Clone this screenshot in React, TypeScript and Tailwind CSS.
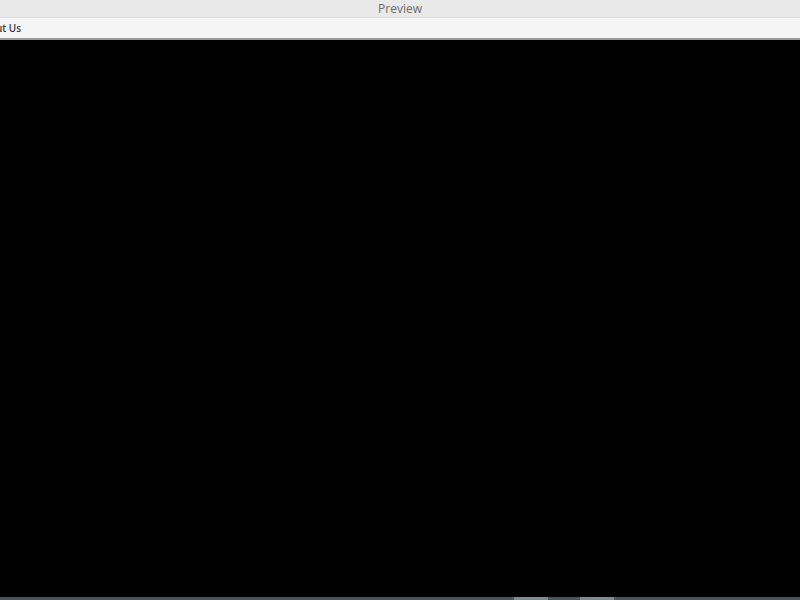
export default function App() {
  return (
    <div className="flex h-[600px] w-[800px] flex-col overflow-hidden bg-black font-['Open_Sans',sans-serif]">
      {/* window title */}
      <div className="flex h-[18px] shrink-0 items-center justify-center border-b border-[#dcdcdc] bg-[#e9e9e9]">
        <span className="text-[12px] leading-none text-[#6b6b6b]">Preview</span>
      </div>

      {/* nav strip, scrolled left */}
      <div className="flex h-[22px] shrink-0 items-center border-b-2 border-[#9a9a9a] bg-[#f5f5f5]">
        <span className="-ml-[23px] text-[10px] font-semibold leading-none text-[#3a3a3a]">About Us</span>
      </div>

      {/* video area */}
      <div className="flex-1 bg-black" />

      {/* bottom scrollbar */}
      <div className="flex h-[3px] shrink-0 bg-[#47575f]">
        <div className="w-[514px]" />
        <div className="w-[34px] bg-[#7d8b92]" />
        <div className="w-[32px]" />
        <div className="w-[34px] bg-[#7d8b92]" />
      </div>
    </div>
  );
}
